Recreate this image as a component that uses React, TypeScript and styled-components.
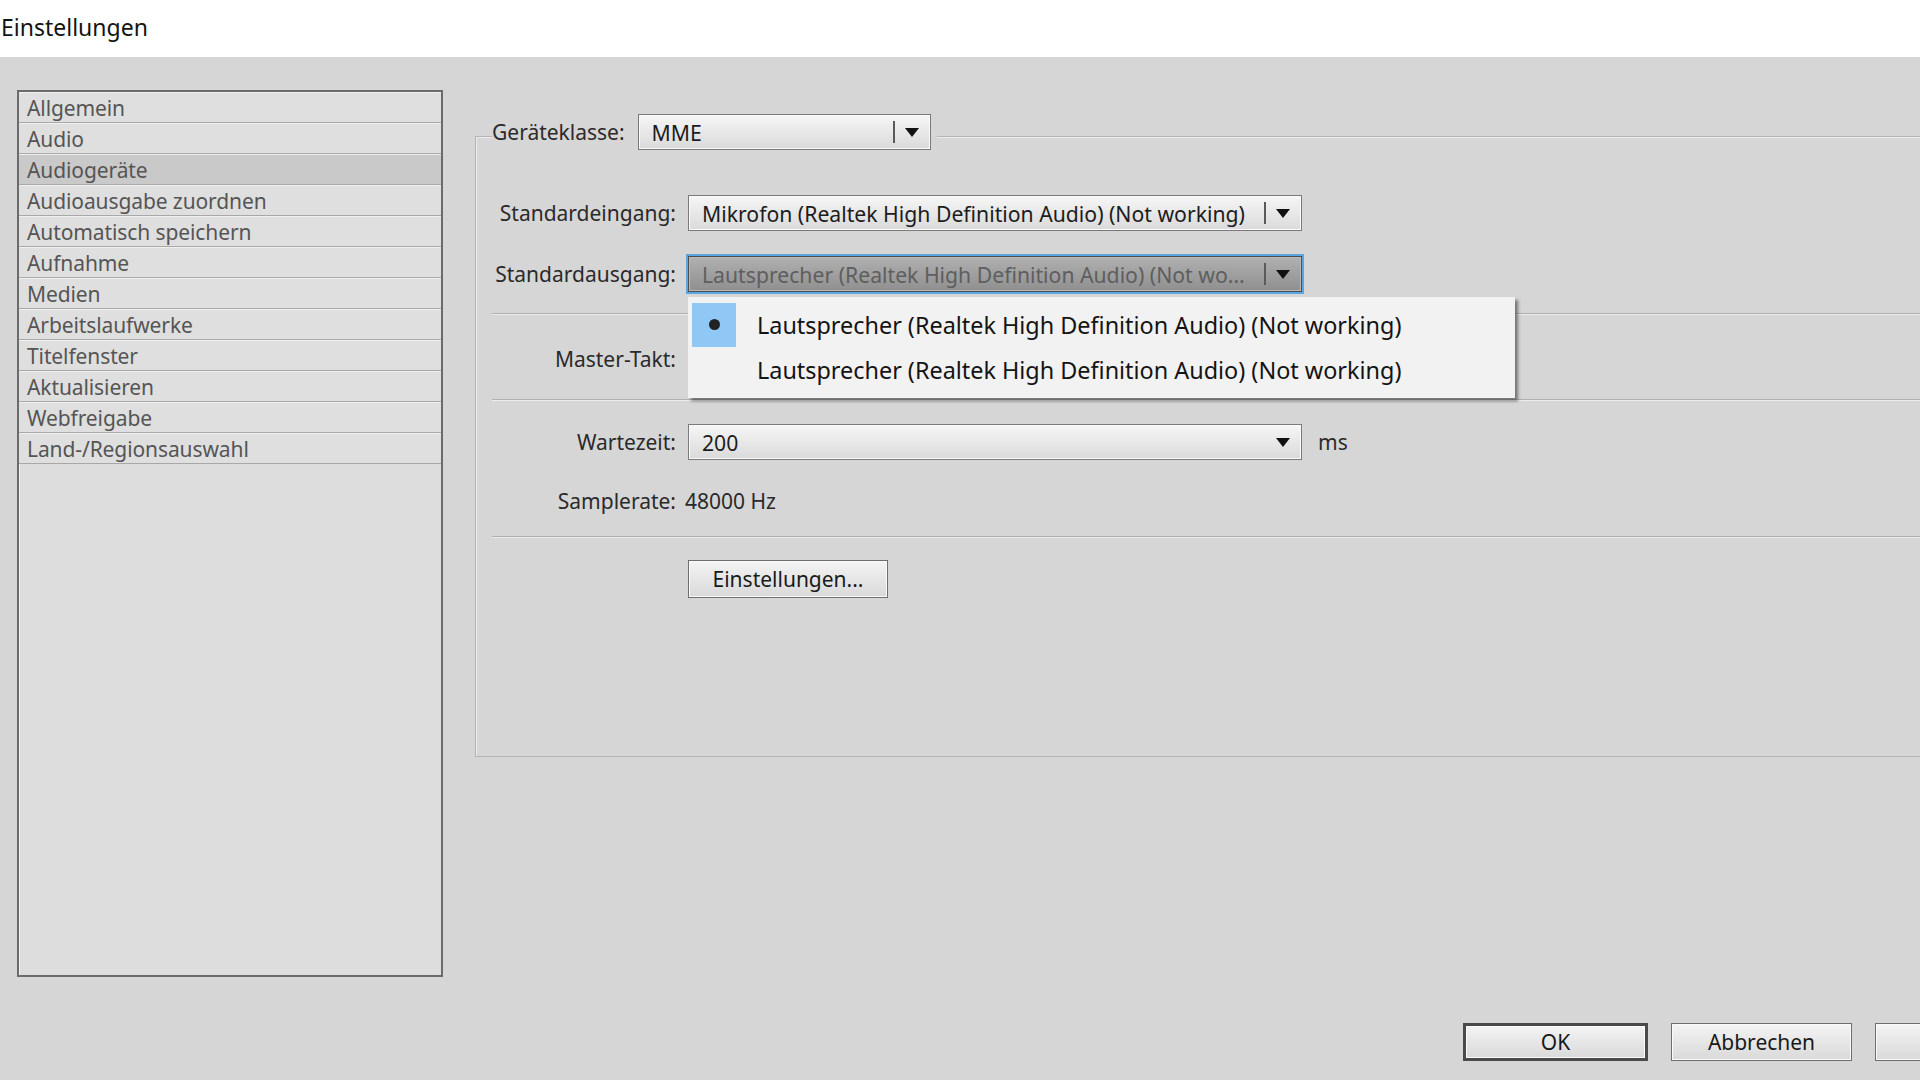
import styled, { createGlobalStyle } from "styled-components";

const GlobalStyle = createGlobalStyle`
  html, body {
    margin: 0;
    padding: 0;
    background: #d6d6d6;
  }
  * {
    box-sizing: border-box;
  }
`;

const categories = [
  "Allgemein",
  "Audio",
  "Audiogeräte",
  "Audioausgabe zuordnen",
  "Automatisch speichern",
  "Aufnahme",
  "Medien",
  "Arbeitslaufwerke",
  "Titelfenster",
  "Aktualisieren",
  "Webfreigabe",
  "Land-/Regionsauswahl",
];

const speaker = "Lautsprecher (Realtek High Definition Audio) (Not working)";

const Arrow = () => (
  <svg width="14" height="9" viewBox="0 0 14 9">
    <path d="M0 0 L14 0 L7 9 Z" fill="#111" />
  </svg>
);

type ComboProps = {
  value: string;
  width: number;
  divider?: boolean;
  focused?: boolean;
};

const Combo = ({ value, width, divider = true, focused }: ComboProps) => (
  <ComboBox $width={width} $focused={focused}>
    <ComboText $focused={focused}>{value}</ComboText>
    {divider ? <ComboDivider /> : null}
    <ComboArrow>
      <Arrow />
    </ComboArrow>
  </ComboBox>
);

export default function App() {
  return (
    <Page>
      <GlobalStyle />
      <TitleBar>Einstellungen</TitleBar>
      <Content>
        <Sidebar>
          {categories.map((c) => (
            <SidebarItem key={c} selected={c === "Audiogeräte"}>
              {c}
            </SidebarItem>
          ))}
        </Sidebar>
        <Main>
          <GroupBox>
            <Legend>
              <LegendLabel>Geräteklasse:</LegendLabel>
              <Combo value="MME" width={293} />
            </Legend>

            <FormRow $top={45}>
              <Label>Standardeingang:</Label>
              <Combo
                value="Mikrofon (Realtek High Definition Audio) (Not working)"
                width={614}
              />
            </FormRow>

            <FormRow $top={26}>
              <Label>Standardausgang:</Label>
              <Anchor>
                <Combo
                  value="Lautsprecher (Realtek High Definition Audio) (Not wo..."
                  width={614}
                  focused
                />
                <Popup>
                  <PopupItem>
                    <BulletBox>
                      <Bullet />
                    </BulletBox>
                    {speaker}
                  </PopupItem>
                  <PopupItem>
                    <BulletSpacer />
                    {speaker}
                  </PopupItem>
                </Popup>
              </Anchor>
            </FormRow>

            <Separator $top={22} />

            <FormRow $top={26}>
              <Label>Master-Takt:</Label>
              <Combo value="" width={614} />
            </FormRow>

            <Separator $top={23} />

            <FormRow $top={23}>
              <Label>Wartezeit:</Label>
              <Combo value="200" width={614} divider={false} />
              <Unit>ms</Unit>
            </FormRow>

            <FormRow $top={24}>
              <Label>Samplerate:</Label>
              <Value>48000 Hz</Value>
            </FormRow>

            <Separator $top={18} />

            <FormRow $top={22}>
              <span />
              <Button $width={200}>Einstellungen...</Button>
            </FormRow>
          </GroupBox>
        </Main>
      </Content>
      <Footer>
        <Button $width={185} $default>
          OK
        </Button>
        <Button $width={181}>Abbrechen</Button>
        <Button $width={185} />
      </Footer>
    </Page>
  );
}

const Page = styled.div`
  width: 1920px;
  height: 1080px;
  overflow: hidden;
  display: flex;
  flex-direction: column;
  background: #d6d6d6;
  font-family: "Noto Sans", "Open Sans", sans-serif;
  color: #1c1c1c;
`;

const TitleBar = styled.div`
  height: 57px;
  background: #ffffff;
  display: flex;
  align-items: center;
  padding: 0 0 4px 1px;
  font-size: 23px;
  color: #141414;
`;

const Content = styled.div`
  display: flex;
  padding: 33px 0 0 17px;
`;

const Sidebar = styled.div`
  width: 426px;
  height: 887px;
  flex-shrink: 0;
  background: #dddddd;
  border: 2px solid #6b6b6b;
  box-shadow: inset 1px 1px 0 #f2f2f2;
`;

const SidebarItem = styled.div<{ selected?: boolean }>`
  height: 31px;
  padding-left: 8px;
  display: flex;
  align-items: center;
  font-size: 21px;
  letter-spacing: -0.1px;
  color: #555555;
  background: ${({ selected }) => (selected ? "#c9c9c9" : "#dfdfdf")};
  border-top: 1px solid #f0f0f0;
  border-bottom: 1px solid #a8a8a8;
`;

const Main = styled.div`
  flex: 1;
  padding: 46px 0 0 32px;
`;

const GroupBox = styled.div`
  width: 1500px;
  height: 621px;
  border: 1px solid #b4b4b4;
  box-shadow: inset 1px 1px 0 #ececec;
  padding: 0 0 0 16px;
  display: flex;
  flex-direction: column;
`;

const Legend = styled.div`
  display: flex;
  align-items: center;
  align-self: flex-start;
  gap: 13px;
  margin-top: -23px;
  padding: 0 6px 0 0;
  background: #d6d6d6;
`;

const LegendLabel = styled.span`
  font-size: 21px;
  color: #2a2a2a;
`;

const FormRow = styled.div<{ $top: number }>`
  display: grid;
  grid-template-columns: 184px 614px auto;
  column-gap: 12px;
  align-items: center;
  height: 35px;
  margin-top: ${({ $top }) => $top}px;
`;

const Label = styled.span`
  text-align: right;
  font-size: 21px;
  color: #2a2a2a;
  white-space: nowrap;
`;

const Value = styled.span`
  font-size: 21px;
  color: #2a2a2a;
  margin-left: -3px;
`;

const Unit = styled.span`
  font-size: 21px;
  color: #2a2a2a;
  margin-left: 4px;
`;

const Separator = styled.div<{ $top: number }>`
  height: 2px;
  margin-top: ${({ $top }) => $top}px;
  border-top: 1px solid #b0b0b0;
  border-bottom: 1px solid #ececec;
`;

const Anchor = styled.div`
  position: relative;
`;

const ComboBox = styled.div<{ $width: number; $focused?: boolean }>`
  position: relative;
  width: ${({ $width }) => $width}px;
  height: 36px;
  display: flex;
  align-items: center;
  padding-left: 13px;
  border: 1px solid ${({ $focused }) => ($focused ? "#4d4d4d" : "#7a7a7a")};
  outline: ${({ $focused }) => ($focused ? "2px solid #5ba6e0" : "none")};
  box-shadow: ${({ $focused }) =>
    $focused ? "inset 0 0 0 1px #b8b8b8" : "inset 0 0 0 1px #fafafa"};
  background: ${({ $focused }) =>
    $focused
      ? "linear-gradient(#b0b0b0, #8f8f8f)"
      : "linear-gradient(#f6f6f6, #dadada)"};
`;

const ComboText = styled.span<{ $focused?: boolean }>`
  flex: 1;
  font-size: 21.2px;
  color: ${({ $focused }) => ($focused ? "#5e5e5e" : "#1c1c1c")};
  white-space: nowrap;
  overflow: hidden;
`;

const ComboDivider = styled.span`
  width: 2px;
  height: 22px;
  background: #5a5a5a;
  margin: 0 5px 0 4px;
`;

const ComboArrow = styled.span`
  width: 24px;
  margin-right: 6px;
  display: flex;
  justify-content: center;
`;

const Popup = styled.div`
  position: absolute;
  top: 41px;
  left: 0;
  width: 827px;
  height: 101px;
  padding: 5px 4px;
  background: #f2f2f2;
  box-shadow: 3px 3px 3px rgba(0, 0, 0, 0.45);
  z-index: 2;
`;

const PopupItem = styled.div`
  height: 45px;
  display: flex;
  align-items: center;
  gap: 21px;
  font-size: 23.4px;
  color: #141414;
  white-space: nowrap;
`;

const BulletBox = styled.span`
  width: 44px;
  height: 44px;
  background: #90c8f5;
  display: flex;
  align-items: center;
  justify-content: center;
`;

const BulletSpacer = styled.span`
  width: 44px;
`;

const Bullet = styled.span`
  width: 11px;
  height: 11px;
  border-radius: 50%;
  background: #222;
`;

const Footer = styled.div`
  display: flex;
  gap: 23px;
  padding: 46px 0 0 1463px;
`;

const Button = styled.div<{ $width: number; $default?: boolean }>`
  width: ${({ $width }) => $width}px;
  height: 38px;
  flex-shrink: 0;
  display: flex;
  align-items: center;
  justify-content: center;
  font-size: 21px;
  color: #1a1a1a;
  border: ${({ $default }) =>
    $default ? "3px solid #4a4a4a" : "1px solid #6e6e6e"};
  box-shadow: inset 0 0 0 1px #fbfbfb;
  background: linear-gradient(#f4f4f4, #d9d9d9);
`;
